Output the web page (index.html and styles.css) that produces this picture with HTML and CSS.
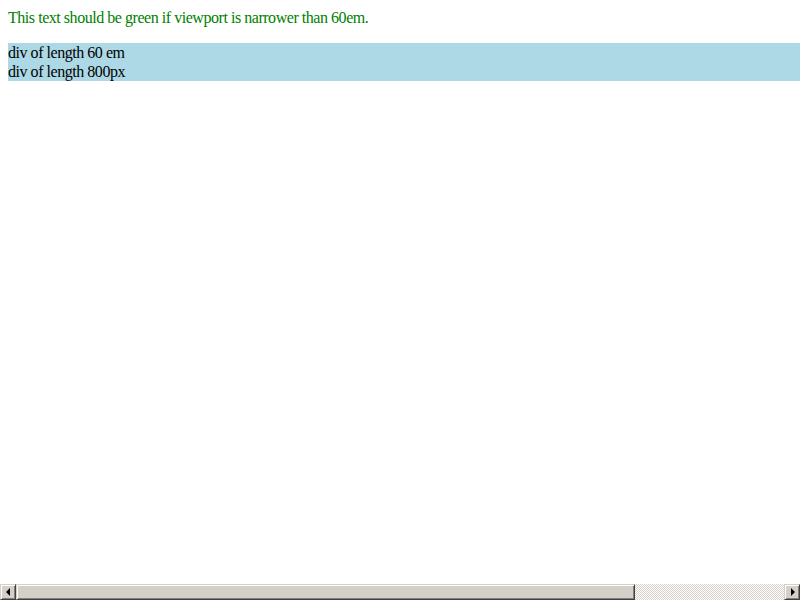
FILE: index.html
```html
<!DOCTYPE html>
<html>
<head>
<meta charset="utf-8">
<link rel="stylesheet" href="styles.css">
</head>
<body>
<p class="note">This text should be green if viewport is narrower than 60em.</p>
<div class="bar">div of length 60 em</div>
<div class="bar">div of length 800px</div>
<div class="hscroll">
  <div class="sb-btn sb-left"><span class="arrow-left"></span></div>
  <div class="sb-track">
    <div class="sb-thumb"></div>
    <div class="sb-rest"></div>
  </div>
  <div class="sb-btn sb-right"><span class="arrow-right"></span></div>
</div>
</body>
</html>
```
FILE: styles.css
```css
html {
  overflow: hidden;
  background: #ffffff;
}
body {
  margin: 8px 0 8px 8px;
  font-family: "Liberation Serif", "Times New Roman", serif;
  font-size: 16px;
  line-height: 19px;
  letter-spacing: -0.46px;
  color: #000000;
}
.note {
  margin: 0 0 16px 0;
  color: #008000;
}
.bar {
  background: #add8e6;
  height: 19px;
}

.hscroll {
  position: fixed;
  left: 0;
  bottom: 0;
  width: 800px;
  height: 16px;
  display: flex;
}
.sb-btn, .sb-thumb {
  box-sizing: border-box;
  background: #d4d0c8;
  border-top: 1px solid #d4d0c8;
  border-left: 1px solid #d4d0c8;
  border-right: 1px solid #404040;
  border-bottom: 1px solid #404040;
  box-shadow: inset 1px 1px 0 #ffffff, inset -1px -1px 0 #808080;
}
.sb-btn {
  width: 16px;
  height: 16px;
  display: flex;
  align-items: center;
  justify-content: center;
}
.sb-track {
  flex: 1;
  display: flex;
  height: 16px;
}
.sb-thumb {
  width: 619px;
  height: 16px;
}
.sb-rest {
  flex: 1;
  background-color: #ffffff;
  background-image:
    linear-gradient(45deg, #d4d0c8 25%, transparent 25%, transparent 75%, #d4d0c8 75%),
    linear-gradient(45deg, #d4d0c8 25%, transparent 25%, transparent 75%, #d4d0c8 75%);
  background-size: 2px 2px;
  background-position: 0 0, 1px 1px;
}
.arrow-left {
  width: 0;
  height: 0;
  border-top: 4px solid transparent;
  border-bottom: 4px solid transparent;
  border-right: 4px solid #000000;
  margin-right: 1px;
}
.arrow-right {
  width: 0;
  height: 0;
  border-top: 4px solid transparent;
  border-bottom: 4px solid transparent;
  border-left: 4px solid #000000;
  margin-left: 1px;
}
```
